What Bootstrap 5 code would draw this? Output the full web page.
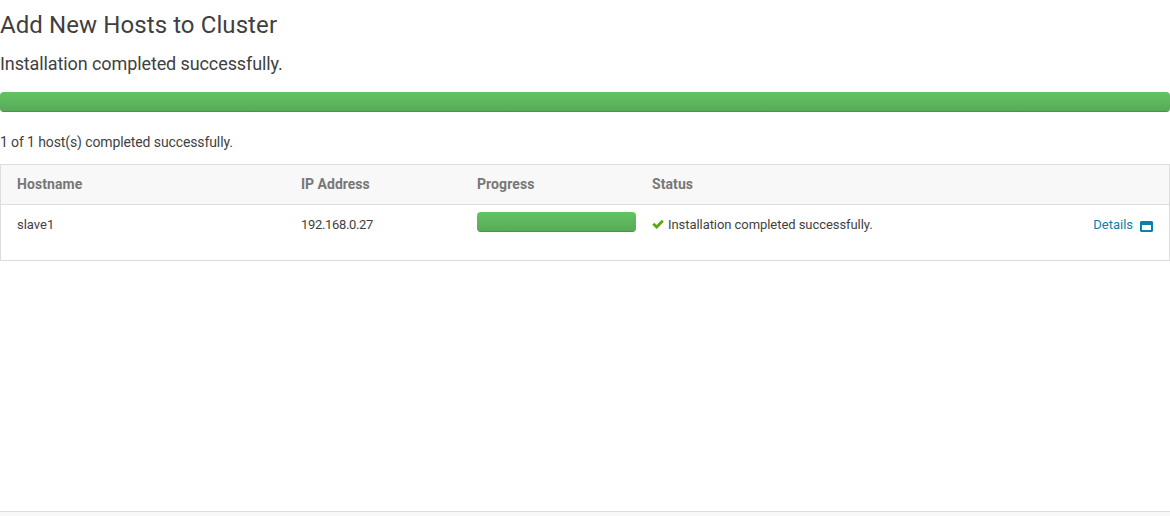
<!DOCTYPE html>
<html lang="en">
<head>
<meta charset="utf-8">
<meta name="viewport" content="width=device-width, initial-scale=1">
<title>Add New Hosts to Cluster</title>
<link rel="stylesheet" href="https://cdn.jsdelivr.net/npm/bootstrap@5.3.0/dist/css/bootstrap.min.css">
<style>
body{font-family:Roboto,sans-serif;font-size:14px;line-height:20px;color:#3f3f3f;height:516px;overflow:hidden}
h1{font-size:24px;line-height:30px;font-weight:400;margin:0;padding-top:10px;letter-spacing:.09px}
h2{font-size:18px;line-height:24px;font-weight:400;margin:12px 0 16px;letter-spacing:-.1px}
.progress{height:20px;border-radius:4px}
.progress-bar{width:100%;background:linear-gradient(#62c462,#57a957);box-shadow:inset 0 -1px 0 rgba(0,0,0,.15)}
.summary{margin:20px 0 12px;letter-spacing:-.11px}
.hosts{table-layout:fixed;border:1px solid #ddd;border-collapse:separate;border-spacing:0;margin:0;font-size:13px}
.hosts th{background:#f8f8f8;color:#777;font-size:14px;font-weight:700;height:40px;padding:9px 16px 10px;border-bottom:1px solid #ddd;letter-spacing:.08px}
.hosts th:nth-child(2){letter-spacing:0}
.hosts td{height:55px;padding:7px 16px;color:#3f3f3f;line-height:26px;border:0}
.hosts .progress{width:159px}
.hosts .address{letter-spacing:-.34px}
.status-text{letter-spacing:-.06px}
.check{margin:0 4px 2px 0}
.details{color:#0b7fad;text-decoration:none}
.window{margin:2px 0 0 7px}
.foot{height:5px;border-top:1px solid #ddd;background:#f8f8f8}
</style>
</head>
<body class="d-flex flex-column">
<main class="flex-grow-1">
<h1>Add New Hosts to Cluster</h1>
<h2>Installation completed successfully.</h2>
<div class="progress"><div class="progress-bar"></div></div>
<p class="summary">1 of 1 host(s) completed successfully.</p>
<table class="table hosts">
<colgroup><col style="width:284px"><col style="width:176px"><col style="width:175px"><col><col style="width:110px"></colgroup>
<thead><tr><th>Hostname</th><th>IP Address</th><th>Progress</th><th>Status</th><th></th></tr></thead>
<tbody><tr><td>slave1</td><td class="address">192.168.0.27</td><td class="pe-0"><div class="progress"><div class="progress-bar"></div></div></td>
<td><div class="d-flex align-items-center"><svg class="check" width="12" height="10" viewBox="0 0 12 10"><path d="M1.3 4.7 4.7 8 10.8 1.7" fill="none" stroke="#5fa80d" stroke-width="2.9"/></svg><span class="status-text">Installation completed successfully.</span></div></td>
<td class="ps-0"><a class="details d-flex align-items-center justify-content-end" href="#">Details <svg class="window" width="13" height="11" viewBox="0 0 13 11"><path fill="currentColor" fill-rule="evenodd" d="M1 0h11l1 1v9l-1 1H1l-1-1V1zM2 4v5h9V4z"/></svg></a></td></tr></tbody>
</table>
</main>
<footer class="foot"></footer>
<script src="https://cdn.jsdelivr.net/npm/bootstrap@5.3.0/dist/js/bootstrap.bundle.min.js"></script>
</body>
</html>
